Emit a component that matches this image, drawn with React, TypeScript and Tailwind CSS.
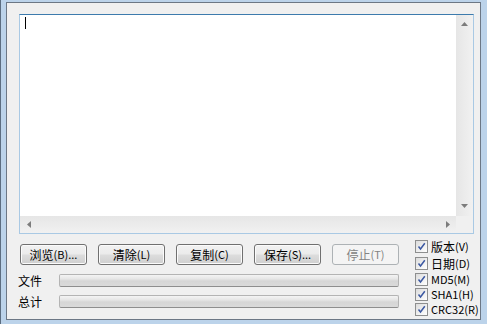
const FONT = "font-['Microsoft_YaHei','Noto_Sans_CJK_SC',sans-serif]";

// Chinese runs at 12px, latin runs a touch smaller like the Win7 UI font
function Txt({ s }: { s: string }) {
  const parts = s.split(/([\u4e00-\u9fff]+)/).filter(Boolean);
  return (
    <>
      {parts.map((p, i) =>
        /[\u4e00-\u9fff]/.test(p) ? (
          <span key={i} className="text-[12px]">{p}</span>
        ) : (
          <span key={i} className="text-[11px]">{p}</span>
        )
      )}
    </>
  );
}

function Btn({ label, disabled }: { label: string; disabled?: boolean }) {
  return (
    <div
      className={
        "w-[67px] h-[21px] rounded-[3px] border flex items-center justify-center leading-none " +
        (disabled
          ? "border-[#adb2b5] bg-[#f4f4f4] text-[#838383]"
          : "border-[#707070] bg-[linear-gradient(#f2f2f2_0%,#ebebeb_48%,#dddddd_52%,#cfcfcf_100%)] shadow-[inset_0_0_0_1px_#fbfbfb] text-black")
      }
    >
      <Txt s={label} />
    </div>
  );
}

function Bar() {
  return (
    <div className="flex-1 h-[13px] rounded-[2px] border border-[#b4b4b4] border-b-[#8e8e8e] bg-[linear-gradient(#f4f4f4_0%,#e6e6e6_35%,#d6d6d6_55%,#dadada_100%)]" />
  );
}

function Check({ label, className }: { label: string; className?: string }) {
  return (
    <div className={"flex items-center h-[13px] " + (className ?? "")}>
      <div className="w-[13px] h-[13px] border border-[#8e8f8f] bg-[linear-gradient(135deg,#dcdcdc,#ffffff)] p-[1px]">
        <svg width="9" height="9" viewBox="0 0 9 9">
          <path d="M1.5 4.5 L3.5 7 L7.8 1.2" fill="none" stroke="#3b58a2" strokeWidth="1.5" />
        </svg>
      </div>
      <span className="ml-[3px] leading-[13px] h-[13px] flex items-center text-black">
        <Txt s={label} />
      </span>
    </div>
  );
}

export default function App() {
  return (
    <div className={"w-[487px] h-[324px] bg-[#bcd3ea] border-l border-[#5c6d80] pl-[5px] pr-[6px] pt-[2px] pb-[4px] " + FONT}>
      <div className="h-full border border-[#6c7785] bg-[#f0f0f0] flex flex-col">
        {/* text box */}
        <div className="ml-[12px] mt-[11px] w-[455px] h-[220px] border border-[#a9c9e4] border-t-[#3d7bad] bg-white flex flex-col">
          <div className="flex flex-1">
            <div className="flex-1 pl-[5px] pt-[2px]">
              <div className="w-px h-[12px] bg-black" />
            </div>
            <div className="w-[17px] bg-[linear-gradient(90deg,#e6e6e6,#f1f1f1)] flex flex-col items-center justify-between pt-[7px] pb-[8px]">
              <svg width="7" height="4" viewBox="0 0 7 4">
                <path d="M0 4 L3.5 0 L7 4 Z" fill="#7c7c7c" />
              </svg>
              <svg width="7" height="4" viewBox="0 0 7 4">
                <path d="M0 0 L7 0 L3.5 4 Z" fill="#7c7c7c" />
              </svg>
            </div>
          </div>
          <div className="flex h-[17px]">
            <div className="flex-1 bg-[linear-gradient(#e6e6e6,#f1f1f1)] flex items-center justify-between pl-[7px] pr-[6px]">
              <svg width="4" height="7" viewBox="0 0 4 7">
                <path d="M4 0 L4 7 L0 3.5 Z" fill="#7c7c7c" />
              </svg>
              <svg width="4" height="7" viewBox="0 0 4 7">
                <path d="M0 0 L4 3.5 L0 7 Z" fill="#7c7c7c" />
              </svg>
            </div>
            <div className="w-[17px] bg-[#f0f0f0]" />
          </div>
        </div>

        {/* bottom controls */}
        <div className="flex mt-[6px]">
          <div className="ml-[11px] w-[381px] flex flex-col">
            <div className="flex gap-[11px] pl-[2px] mt-[4px]">
              <Btn label="浏览(B)..." />
              <Btn label="清除(L)" />
              <Btn label="复制(C)" />
              <Btn label="保存(S)..." />
              <Btn label="停止(T)" disabled />
            </div>
            <div className="flex items-center mt-[9px]">
              <span className="w-[41px] text-[12px] leading-none">文件</span>
              <Bar />
            </div>
            <div className="flex items-center mt-[8px]">
              <span className="w-[41px] text-[12px] leading-none">总计</span>
              <Bar />
            </div>
          </div>
          <div className="ml-[16px] flex flex-col">
            <Check label="版本(V)" />
            <Check label="日期(D)" className="mt-[4px]" />
            <Check label="MD5(M)" className="mt-[3px]" />
            <Check label="SHA1(H)" className="mt-[2px]" />
            <Check label="CRC32(R)" className="mt-[2px]" />
          </div>
        </div>
      </div>
    </div>
  );
}
